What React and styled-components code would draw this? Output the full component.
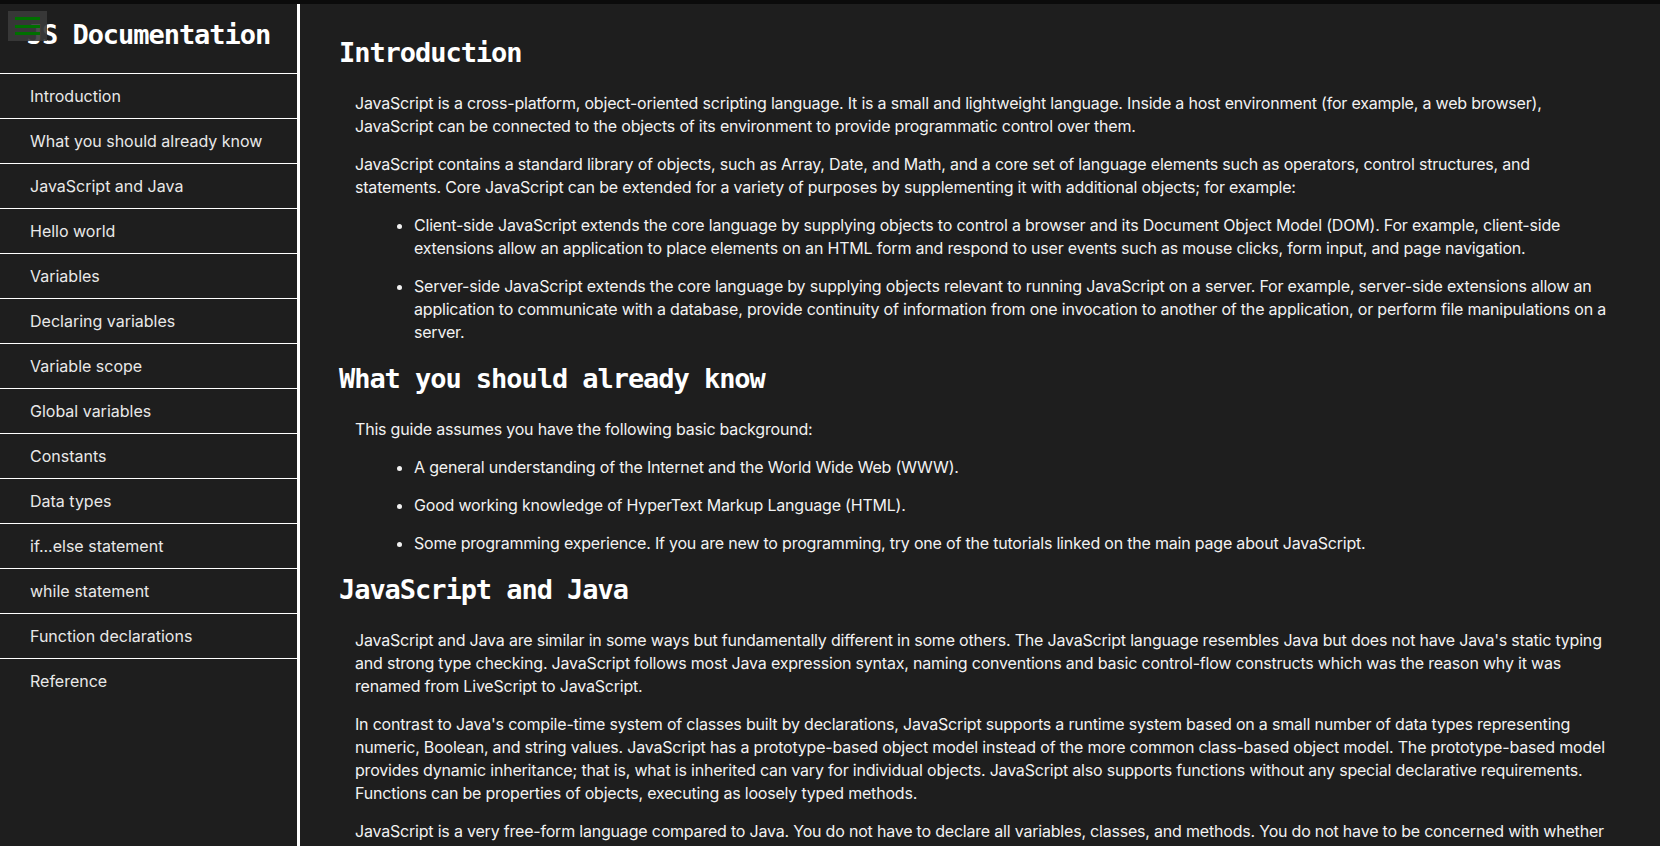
import React from "react";
import styled, { createGlobalStyle } from "styled-components";

const GlobalStyle = createGlobalStyle`
  html, body {
    margin: 0;
    padding: 0;
    background: #1e1e1e;
    overflow: hidden;
  }
  * { box-sizing: border-box; }
  body {
    font-family: Inter, "Noto Sans", sans-serif;
    color: #f2f2f2;
  }
`;

const Page = styled.div`
  display: flex;
  height: 100vh;
  border-top: 4px solid #0b0b0b;
  background: #1e1e1e;
`;

const Sidebar = styled.nav`
  position: relative;
  flex: 0 0 300px;
  width: 300px;
  height: 100%;
  border-right: 3px solid #ffffff;
  background: #1e1e1e;
  display: flex;
  flex-direction: column;
`;

const SideHeader = styled.header`
  height: 69px;
  display: flex;
  justify-content: center;
  align-items: flex-start;
  padding-top: 15px;
`;

const Title = styled.h1`
  margin: 0;
  font-family: "DejaVu Sans Mono", "Liberation Mono", monospace;
  font-weight: 700;
  font-size: 27px;
  line-height: 32px;
  letter-spacing: -1.05px;
  color: #ffffff;
  white-space: nowrap;
`;

const MenuButton = styled.button`
  position: absolute;
  left: 8px;
  top: 7px;
  width: 39px;
  height: 30px;
  padding: 6px 7px;
  border: none;
  background: rgba(58, 58, 58, 0.9);
  display: flex;
  flex-direction: column;
  justify-content: space-between;
  cursor: pointer;
`;

const Bar = styled.span`
  display: block;
  width: 25px;
  height: 3px;
  background: #006f00;
`;

const NavList = styled.ul`
  list-style: none;
  margin: 0;
  padding: 0;
`;

const NavItem = styled.li`
  height: 45px;
  border-top: 1px solid #ffffff;
  display: flex;
  align-items: center;
  padding-left: 30px;
  font-family: Inter, "Noto Sans", sans-serif;
  font-size: 16px;
  color: #e9e9e9;
`;

const Main = styled.main`
  flex: 1;
  height: 100%;
  overflow: hidden;
  padding: 14px 47px 0 39px;
`;

const Section = styled.section``;

const Heading = styled.h2`
  margin: 19px 0 23px;
  font-family: "DejaVu Sans Mono", "Liberation Mono", monospace;
  font-weight: 700;
  font-size: 27px;
  line-height: 32px;
  letter-spacing: -1.05px;
  color: #ffffff;
`;

const Para = styled.p`
  margin: 0 0 15px 16px;
  font-size: 16px;
  line-height: 23px;
  letter-spacing: -0.2px;
  color: #f2f2f2;
`;

const List = styled.ul`
  margin: 0;
  padding-left: 75px;
`;

const Item = styled.li`
  margin: 0 0 15px;
  font-size: 16px;
  line-height: 23px;
  letter-spacing: -0.2px;
  color: #f2f2f2;
`;

const navItems = [
  "Introduction",
  "What you should already know",
  "JavaScript and Java",
  "Hello world",
  "Variables",
  "Declaring variables",
  "Variable scope",
  "Global variables",
  "Constants",
  "Data types",
  "if...else statement",
  "while statement",
  "Function declarations",
  "Reference",
];

const sections = [
  {
    title: "Introduction",
    blocks: [
      {
        p: "JavaScript is a cross-platform, object-oriented scripting language. It is a small and lightweight language. Inside a host environment (for example, a web browser), JavaScript can be connected to the objects of its environment to provide programmatic control over them.",
      },
      {
        p: "JavaScript contains a standard library of objects, such as Array, Date, and Math, and a core set of language elements such as operators, control structures, and statements. Core JavaScript can be extended for a variety of purposes by supplementing it with additional objects; for example:",
      },
      {
        ul: [
          "Client-side JavaScript extends the core language by supplying objects to control a browser and its Document Object Model (DOM). For example, client-side extensions allow an application to place elements on an HTML form and respond to user events such as mouse clicks, form input, and page navigation.",
          "Server-side JavaScript extends the core language by supplying objects relevant to running JavaScript on a server. For example, server-side extensions allow an application to communicate with a database, provide continuity of information from one invocation to another of the application, or perform file manipulations on a server.",
        ],
      },
    ],
  },
  {
    title: "What you should already know",
    blocks: [
      { p: "This guide assumes you have the following basic background:" },
      {
        ul: [
          "A general understanding of the Internet and the World Wide Web (WWW).",
          "Good working knowledge of HyperText Markup Language (HTML).",
          "Some programming experience. If you are new to programming, try one of the tutorials linked on the main page about JavaScript.",
        ],
      },
    ],
  },
  {
    title: "JavaScript and Java",
    blocks: [
      {
        p: "JavaScript and Java are similar in some ways but fundamentally different in some others. The JavaScript language resembles Java but does not have Java's static typing and strong type checking. JavaScript follows most Java expression syntax, naming conventions and basic control-flow constructs which was the reason why it was renamed from LiveScript to JavaScript.",
      },
      {
        p: "In contrast to Java's compile-time system of classes built by declarations, JavaScript supports a runtime system based on a small number of data types representing numeric, Boolean, and string values. JavaScript has a prototype-based object model instead of the more common class-based object model. The prototype-based model provides dynamic inheritance; that is, what is inherited can vary for individual objects. JavaScript also supports functions without any special declarative requirements. Functions can be properties of objects, executing as loosely typed methods.",
      },
      {
        p: "JavaScript is a very free-form language compared to Java. You do not have to declare all variables, classes, and methods. You do not have to be concerned with whether methods are public, private, or protected, and you do not have to implement interfaces. Variables, parameters, and function return types are not explicitly typed.",
      },
    ],
  },
];

export default function App() {
  return (
    <>
      <GlobalStyle />
      <Page>
        <Sidebar>
          <SideHeader>
            <Title>JS Documentation</Title>
          </SideHeader>
          <MenuButton aria-label="menu">
            <Bar />
            <Bar />
            <Bar />
          </MenuButton>
          <NavList>
            {navItems.map((n) => (
              <NavItem key={n}>{n}</NavItem>
            ))}
          </NavList>
        </Sidebar>
        <Main>
          {sections.map((s) => (
            <Section key={s.title}>
              <Heading>{s.title}</Heading>
              {s.blocks.map((b, i) =>
                b.p ? (
                  <Para key={i}>{b.p}</Para>
                ) : (
                  <List key={i}>
                    {b.ul.map((t) => (
                      <Item key={t}>{t}</Item>
                    ))}
                  </List>
                )
              )}
            </Section>
          ))}
        </Main>
      </Page>
    </>
  );
}
